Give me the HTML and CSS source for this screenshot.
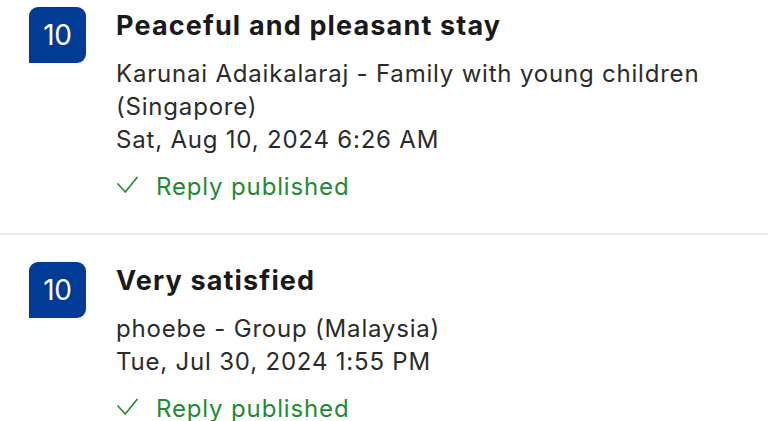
FILE: index.html
```html
<!DOCTYPE html>
<html lang="en">
<head>
<meta charset="utf-8">
<title>Reviews</title>
<link rel="stylesheet" href="styles.css">
</head>
<body>
<div class="list">
  <div class="review">
    <div class="badge">10</div>
    <div class="body">
      <div class="title">Peaceful and pleasant stay</div>
      <div class="meta">
        <div class="author">Karunai Adaikalaraj - Family with young children (Singapore)</div>
        <div class="date">Sat, Aug 10, 2024 6:26 AM</div>
      </div>
      <div class="status">
        <svg class="check" width="22" height="18" viewBox="0 0 22 18"><polyline points="2,8 9.3,16 21,1.5" fill="none" stroke="#2a8a3c" stroke-width="1.7" stroke-linecap="round" stroke-linejoin="round"/></svg>
        <span>Reply published</span>
      </div>
    </div>
  </div>
  <div class="review">
    <div class="badge">10</div>
    <div class="body">
      <div class="title">Very satisfied</div>
      <div class="meta">
        <div class="author">phoebe - Group (Malaysia)</div>
        <div class="date">Tue, Jul 30, 2024 1:55 PM</div>
      </div>
      <div class="status">
        <svg class="check" width="22" height="18" viewBox="0 0 22 18"><polyline points="2,8 9.3,16 21,1.5" fill="none" stroke="#2a8a3c" stroke-width="1.7" stroke-linecap="round" stroke-linejoin="round"/></svg>
        <span>Reply published</span>
      </div>
    </div>
  </div>
</div>
</body>
</html>
```

FILE: styles.css
```css
html, body {
  margin: 0;
  padding: 0;
  background: #ffffff;
}
body {
  font-family: Inter, "Liberation Sans", Arial, sans-serif;
  color: #262626;
  overflow: hidden;
}
.list {
  margin-top: -23px;
}
.review {
  display: flex;
  gap: 30px;
  padding: 27px 20px 29px 29px;
  border-bottom: 2px solid #ebebeb;
}
.review:first-child {
  padding-top: 30px;
}
.badge {
  flex: none;
  width: 57px;
  height: 56px;
  background: #003b95;
  color: #ffffff;
  border-radius: 9px 9px 9px 0;
  display: flex;
  align-items: center;
  justify-content: center;
  font-size: 28px;
  letter-spacing: -0.3px;
}
.body {
  padding-top: 4px;
  min-width: 0;
}
.title {
  font-size: 27px;
  font-weight: 700;
  line-height: 30px;
  letter-spacing: 1.15px;
  color: #1a1a1a;
}
.meta {
  margin-top: 16px;
  font-size: 24px;
  line-height: 33px;
  letter-spacing: 0.8px;
  color: #2b2b2b;
}
.author {
  max-width: 620px;
}
.status {
  margin-top: 14px;
  display: flex;
  align-items: center;
  font-size: 24px;
  line-height: 34px;
  letter-spacing: 0.85px;
  color: #1f8a35;
}
.check {
  flex: none;
  margin-left: 0;
  margin-right: 18px;
  margin-top: -4px;
}
```
